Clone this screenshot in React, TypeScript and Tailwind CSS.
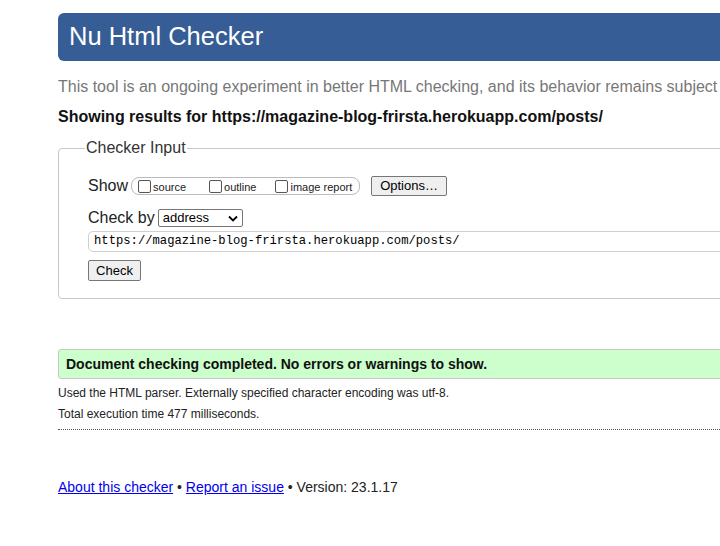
import React from "react";

export default function App() {
  return (
    <div className="w-[720px] h-[546px] overflow-hidden bg-white font-['Liberation_Sans',Arial,sans-serif] text-[#222]">
      <div className="ml-[58px] w-[760px] pt-[13px]">
        <h1 className="h-[48px] rounded-[6px] bg-[#365d95] pl-[11px] text-[25.5px] leading-[46px] text-white">
          Nu Html Checker
        </h1>
        <p className="mt-[16px] whitespace-nowrap text-[16px] leading-[20px] text-[#777]">
          This tool is an ongoing experiment in better HTML checking, and its behavior remains subject to change
        </p>
        <p className="mt-[10px] whitespace-nowrap text-[16px] font-bold leading-[20px] text-[#111]">
          Showing results for https://magazine-blog-frirsta.herokuapp.com/posts/
        </p>
        <fieldset className="mt-[11px] h-[161px] rounded-[4px] border border-[#c8c8c8] pl-[29px]">
          <legend className="ml-[-3px] px-[1px] text-[16px] leading-[20px] text-[#333]">Checker Input</legend>
          <div className="mt-[16px] flex items-center">
            <span className="text-[16px] text-[#222]">Show</span>
            <div className="ml-[3px] flex h-[18px] w-[229px] items-center rounded-[8px] border border-[#bbb] pl-[6px] text-[11px] text-[#222]">
              <span className="inline-block h-[13px] w-[13px] rounded-[2px] border border-[#555]" />
              <span className="ml-[2px] mt-[2px]">source</span>
              <span className="ml-[23px] inline-block h-[13px] w-[13px] rounded-[2px] border border-[#555]" />
              <span className="ml-[2px] mt-[2px]">outline</span>
              <span className="ml-[19px] inline-block h-[13px] w-[13px] rounded-[2px] border border-[#555]" />
              <span className="ml-[2px] mt-[2px]">image report</span>
            </div>
            <span className="ml-[11px] flex h-[20px] w-[76px] items-center justify-center rounded-[2px] border border-[#767676] bg-[#efefef] text-[13px] text-black">
              Options…
            </span>
          </div>
          <div className="mt-[8px] flex items-center">
            <span className="text-[16px] text-[#222]">Check by</span>
            <span className="ml-[3px] flex h-[18px] w-[85px] items-center justify-between rounded-[2px] border border-[#767676] pl-[4px] pr-[4px] text-[13px] text-black">
              address
              <svg width="10" height="7" viewBox="0 0 10 7">
                <path d="M1 1.5 L5 5.5 L9 1.5" fill="none" stroke="#000" strokeWidth="1.8" />
              </svg>
            </span>
          </div>
          <div className="mt-[1px] flex h-[21px] items-center rounded-[5px] border border-[#d0d0d0] pl-[5px] font-['Liberation_Mono',monospace] text-[12.2px] text-black">
            https://magazine-blog-frirsta.herokuapp.com/posts/
          </div>
          <span className="mt-[8px] flex h-[21px] w-[53px] items-center justify-center rounded-[2px] border border-[#767676] bg-[#efefef] text-[13px] text-black">
            Check
          </span>
        </fieldset>
        <div className="mt-[50px] flex h-[30px] items-center rounded-[3px] border border-[#c8c8c8] bg-[#ccffcc] pl-[7px] text-[14px] font-bold text-[#111]">
          Document checking completed. No errors or warnings to show.
        </div>
        <p className="mt-[6px] text-[12px] leading-[16px] text-[#222]">
          Used the HTML parser. Externally specified character encoding was utf-8.
        </p>
        <p className="mt-[5px] text-[12px] leading-[16px] text-[#222]">Total execution time 477 milliseconds.</p>
        <div className="mt-[7px] border-t border-dotted border-[#555]" />
        <p className="mt-[48px] text-[14px] leading-[18px] text-[#222]">
          <a className="text-[#0000ee] underline">About this checker</a> •{" "}
          <a className="text-[#0000ee] underline">Report an issue</a> • Version: 23.1.17
        </p>
      </div>
    </div>
  );
}
